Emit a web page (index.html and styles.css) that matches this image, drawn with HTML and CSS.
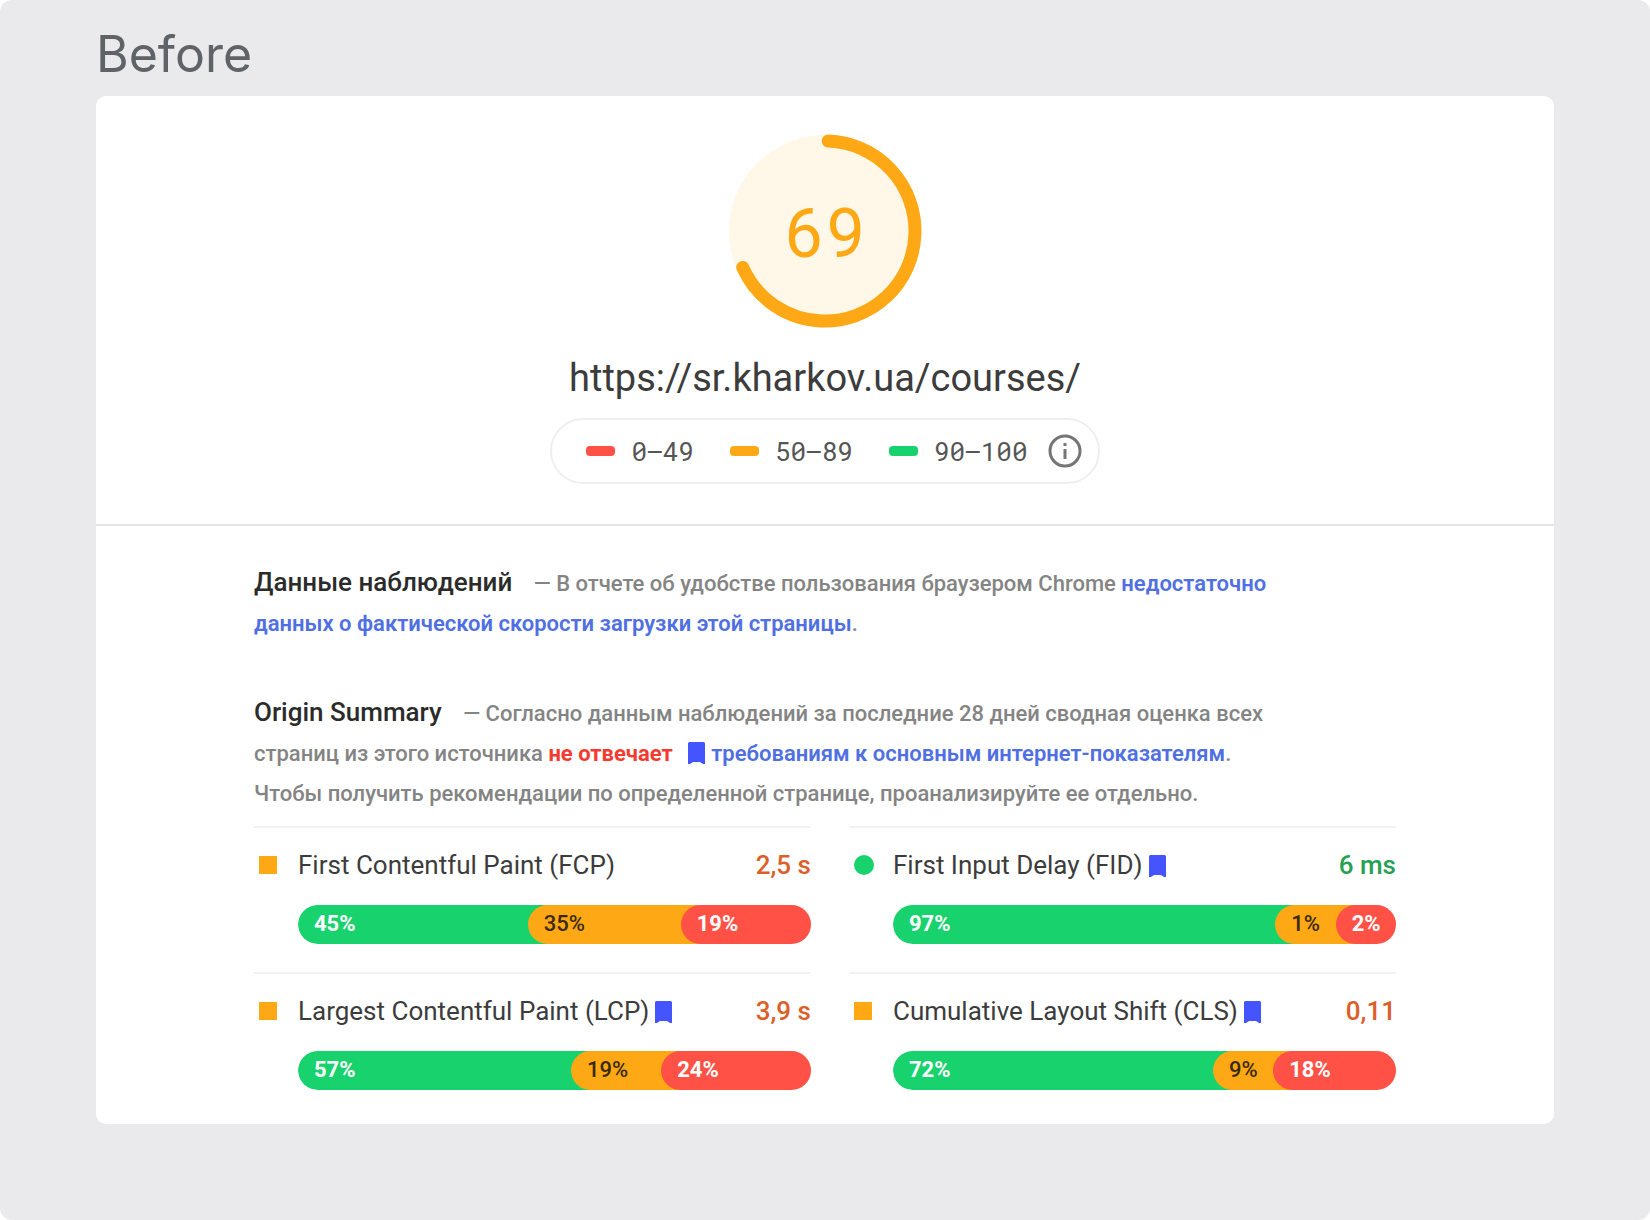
FILE: index.html
```html
<!DOCTYPE html>
<html lang="ru">
<head>
    <meta charset="UTF-8">
    <meta name="viewport" content="width=device-width, initial-scale=1.0">
    <title>PageSpeed – Before</title>
    <link rel="stylesheet" href="styles.css">
</head>
<body>
    <svg width="0" height="0" class="sprite" aria-hidden="true">
        <symbol id="bookmark" viewBox="0 0 17 22">
            <path d="M1.5 0h14A1.5 1.5 0 0 1 17 1.5V22h-2l-3-2H5l-3 2H0V1.5A1.5 1.5 0 0 1 1.5 0z"/>
        </symbol>
    </svg>

    <main class="page">
        <h1 class="page-title">Before</h1>

        <div class="card">
            <!-- Score -->
            <section class="score">
                <div class="gauge">
                    <svg class="gauge-ring" viewBox="0 0 194 194" aria-hidden="true">
                        <circle cx="97" cy="97" r="96" fill="#fff7e8"/>
                        <circle cx="97" cy="97" r="90" fill="none" stroke="#fda814" stroke-width="13" stroke-linecap="round" pathLength="100" stroke-dasharray="67.8 100" transform="rotate(-88 97 97)"/>
                    </svg>
                    <span class="gauge-value">69</span>
                </div>
                <p class="url">https://sr.kharkov.ua/courses/</p>
                <div class="scale">
                    <span class="range"><i class="dash bad"></i>0–49</span>
                    <span class="range"><i class="dash medium"></i>50–89</span>
                    <span class="range"><i class="dash good"></i>90–100</span>
                    <svg class="info" viewBox="0 0 34 34" role="img" aria-label="Info">
                        <circle cx="17" cy="17" r="15" fill="none" stroke="#757575" stroke-width="3"/>
                        <path d="M15.500 15h3v10h-3zM15.500 9h3v3h-3z" fill="#757575"/>
                    </svg>
                </div>
            </section>

            <!-- Field data -->
            <section class="report">
                <p class="summary"><strong class="heading">Данные наблюдений</strong> — В отчете об удобстве пользования браузером Chrome <a href="#">недостаточно<br>данных о фактической скорости загрузки этой страницы</a>.</p>

                <p class="summary"><strong class="heading">Origin Summary</strong> — Согласно данным наблюдений за последние 28 дней сводная оценка всех<br>страниц из этого источника <b class="fail">не отвечает</b> <svg class="bookmark"><use href="#bookmark"/></svg><a href="#">требованиям к основным интернет-показателям</a>.<br>Чтобы получить рекомендации по определенной странице, проанализируйте ее отдельно.</p>

                <div class="metrics">
                    <div class="metric">
                        <div class="metric-head">
                            <i class="mark square"></i>
                            <span class="name">First Contentful Paint (FCP)</span>
                            <span class="value">2,5 s</span>
                        </div>
                        <div class="bar">
                            <span class="part good" style="width: 44.8%">45%</span>
                            <span class="part medium" style="width: 29.8%">35%</span>
                            <span class="part bad">19%</span>
                        </div>
                    </div>
                    <div class="metric">
                        <div class="metric-head">
                            <i class="mark circle"></i>
                            <span class="name">First Input Delay (FID)<svg class="bookmark"><use href="#bookmark"/></svg></span>
                            <span class="value fast">6 ms</span>
                        </div>
                        <div class="bar">
                            <span class="part good" style="width: 76%">97%</span>
                            <span class="part medium" style="width: 12%">1%</span>
                            <span class="part bad">2%</span>
                        </div>
                    </div>
                    <div class="metric">
                        <div class="metric-head">
                            <i class="mark square"></i>
                            <span class="name">Largest Contentful Paint (LCP)<svg class="bookmark"><use href="#bookmark"/></svg></span>
                            <span class="value">3,9 s</span>
                        </div>
                        <div class="bar">
                            <span class="part good" style="width: 53.2%">57%</span>
                            <span class="part medium" style="width: 17.6%">19%</span>
                            <span class="part bad">24%</span>
                        </div>
                    </div>
                    <div class="metric">
                        <div class="metric-head">
                            <i class="mark square"></i>
                            <span class="name">Cumulative Layout Shift (CLS)<svg class="bookmark"><use href="#bookmark"/></svg></span>
                            <span class="value">0,11</span>
                        </div>
                        <div class="bar">
                            <span class="part good" style="width: 63.6%">72%</span>
                            <span class="part medium" style="width: 12%">9%</span>
                            <span class="part bad">18%</span>
                        </div>
                    </div>
                </div>
            </section>
        </div>
    </main>
</body>
</html>
```
FILE: styles.css
```css
:root {
    --good: #18d26e;
    --medium: #fda814;
    --bad: #ff5146;
}

* {
    box-sizing: border-box;
}

body {
    margin: 0;
    background-color: #ffffff;
    font-family: Roboto, sans-serif;
    color: #3c3c3c;
}

.sprite {
    position: absolute;
}

.page {
    min-height: 100vh;
    padding: 24px 96px 96px;
    background-color: #eaeaec;
    border-radius: 12px;
}

.page-title {
    margin: 0;
    padding-bottom: 12px;
    font-family: Inter, Roboto, sans-serif;
    font-size: 50px;
    line-height: 60px;
    font-weight: 400;
    color: #5f6368;
}

.card {
    background-color: #ffffff;
    border-radius: 10px;
}

/* Score */
.score {
    display: flex;
    flex-direction: column;
    align-items: center;
    padding: 38px 0 40px;
    border-bottom: 2px solid #e6e6e6;
}

.gauge {
    display: grid;
    place-items: center;
    width: 194px;
    height: 194px;
}

.gauge-ring,
.gauge-value {
    grid-area: 1 / 1;
}

.gauge-value {
    font-family: "Roboto Mono", Roboto, sans-serif;
    font-size: 68px;
    line-height: 80px;
    color: var(--medium);
}

.url {
    margin: 26px 0 16px;
    font-size: 38px;
    line-height: 48px;
}

.scale {
    display: flex;
    align-items: center;
    height: 66px;
    padding: 0 16px 0 34px;
    border: 2px solid #efefef;
    border-radius: 33px;
}

.range {
    display: flex;
    align-items: center;
    gap: 16px;
    margin-right: 36px;
    font-family: "Roboto Mono", "DejaVu Sans Mono", monospace;
    font-size: 26px;
    line-height: 32px;
    color: #555555;
}

.range:last-of-type {
    margin-right: 20px;
}

.dash {
    width: 29px;
    height: 10px;
    border-radius: 4px;
}

.info {
    width: 34px;
    height: 34px;
}

.good {
    background-color: var(--good);
}

.medium {
    background-color: var(--medium);
}

.bad {
    background-color: var(--bad);
}

/* Field data */
.report {
    padding: 36px 158px 34px;
}

.summary {
    margin: 0 0 48px;
    font-size: 22px;
    line-height: 40px;
    font-weight: 500;
    color: #848484;
}

.summary + .summary {
    margin-bottom: 12px;
}

.heading {
    margin-right: 16px;
    font-size: 26px;
    line-height: 40px;
    font-weight: 500;
    color: #2b2b2b;
}

.summary a {
    font-weight: 600;
    color: #4f6fe3;
    text-decoration: none;
}

.fail {
    margin-right: 4px;
    font-weight: 700;
    color: #f53a2f;
}

.bookmark {
    width: 17px;
    height: 22px;
    margin: 0 6px;
    vertical-align: -3px;
    fill: #4454ff;
}

.metrics {
    display: grid;
    grid-template-columns: 56fr 55fr;
    gap: 28px 38px;
}

.metric {
    border-top: 2px solid #f3f3f3;
}

.metric-head {
    display: flex;
    align-items: center;
    height: 74px;
    margin-bottom: 3px;
}

.mark {
    width: 18px;
    height: 18px;
    margin: 0 21px 0 5px;
    background-color: var(--medium);
}

.mark.circle {
    width: 20px;
    height: 20px;
    margin-right: 19px;
    border-radius: 50%;
    background-color: var(--good);
}

.name {
    flex: 1;
    font-size: 26px;
    line-height: 32px;
}

.value {
    font-size: 26px;
    line-height: 32px;
    font-weight: 500;
    color: #dc5f28;
}

.fast {
    color: #26a052;
}

.bar {
    display: flex;
    height: 39px;
    margin-left: 44px;
    border-radius: 20px;
    overflow: hidden;
}

/* the shadow fills the corner behind the next rounded part */
.part {
    padding-left: 16px;
    border-radius: 20px 0 0 20px;
    font-size: 22px;
    line-height: 38px;
    font-weight: 700;
    color: #ffffff;
}

.part.good {
    box-shadow: 20px 0 0 var(--good);
}

.part.medium {
    box-shadow: 20px 0 0 var(--medium);
    font-weight: 500;
    color: #3a2a08;
}

.part.bad {
    flex: 1;
}
```
